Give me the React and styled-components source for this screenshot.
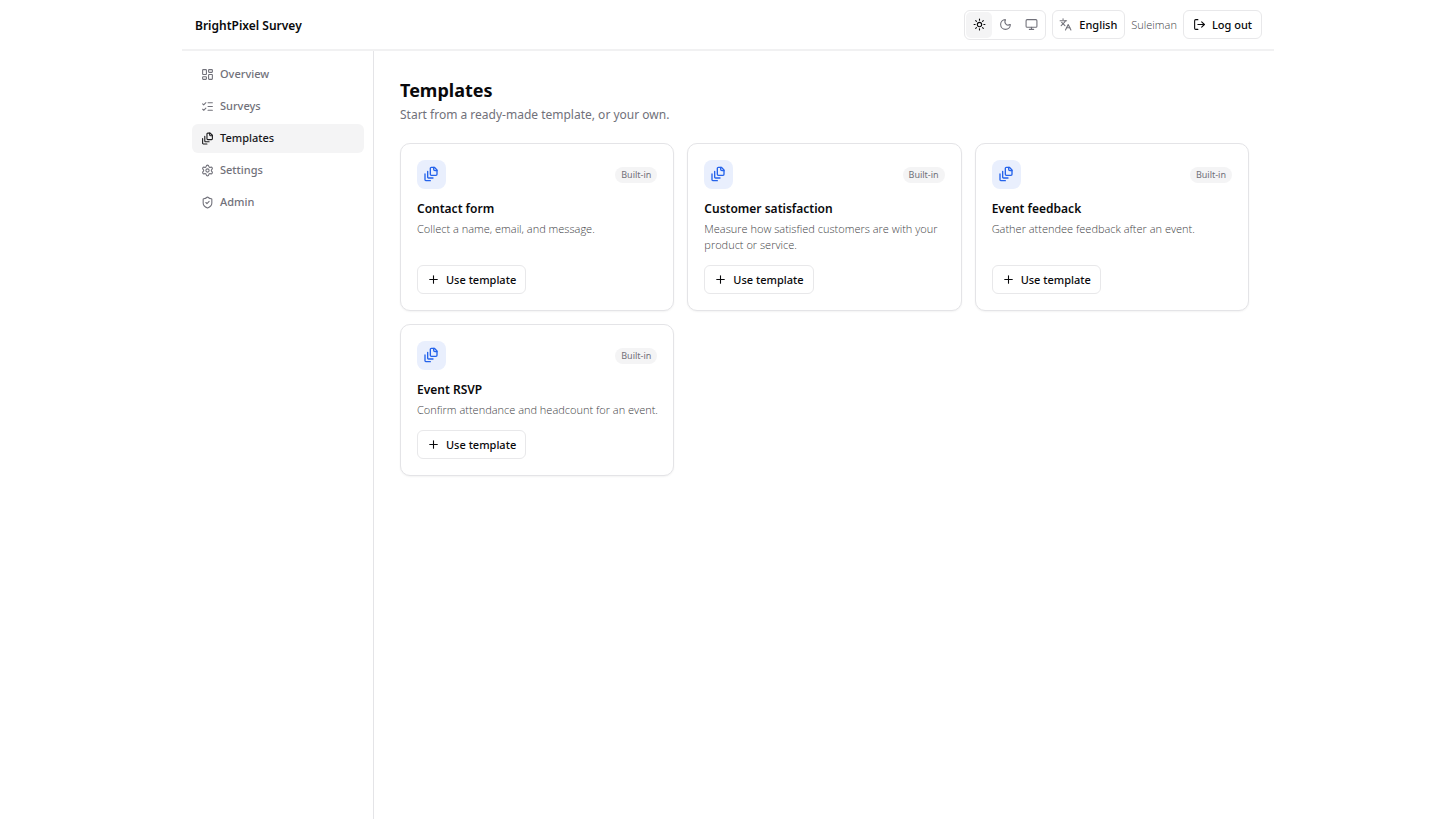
import React, { useState } from 'react';
import styled, { createGlobalStyle, css } from 'styled-components';
import {
  LayoutDashboard, ListChecks, Settings, ShieldCheck,
  Sun, Moon, Monitor, Languages, LogOut, Plus,
} from 'lucide-react';

const GlobalStyle = createGlobalStyle`
  *, *::before, *::after { box-sizing: border-box; }
  body {
    margin: 0;
    background: #fff;
    color: #09090b;
    font-family: "Noto Sans", "Open Sans", sans-serif;
    font-size: 11px;
    line-height: 16px;
  }
  h1, h2, p, ul { margin: 0; padding: 0; }
  button { font: inherit; color: inherit; cursor: pointer; }
`;

const lightText = css`
  color: #3f3f46;
  font-family: "Open Sans", "Noto Sans", sans-serif;
  font-weight: 300;
`;

const Shell = styled.div`
  width: 75%;
  min-height: 100vh;
  margin: 0 auto;
  display: flex;
  flex-direction: column;
`;

const Header = styled.header`
  display: flex;
  align-items: center;
  justify-content: space-between;
  height: 51px;
  padding: 0 12px 0 13px;
  border-bottom: 2px solid #f1f1f2;
`;

const Brand = styled.a`
  padding-top: 2px;
  color: inherit;
  font-size: 12px;
  font-weight: 600;
  text-decoration: none;
`;

const Tools = styled.div`
  display: flex;
  align-items: center;
  gap: 6px;
`;

const ThemeSwitch = styled.div`
  display: flex;
  padding: 1px;
  border: 1px solid #e8e8ea;
  border-radius: 6px;
`;

const ThemeButton = styled.button`
  display: grid;
  place-items: center;
  width: 26px;
  height: 26px;
  padding: 0;
  border: 0;
  border-radius: 5px;
  background: ${(p) => (p.$active ? '#f4f4f5' : 'transparent')};
  color: ${(p) => (p.$active ? '#09090b' : '#71717a')};
`;

const OutlineButton = styled.button`
  display: inline-flex;
  align-items: center;
  gap: 6px;
  height: 29px;
  padding: 0 9px;
  border: 1px solid #e8e8ea;
  border-radius: 6px;
  background: #fff;
  font-weight: 500;
`;

const LanguageButton = styled(OutlineButton)`
  gap: 7px;
  padding: 0 7px 0 6px;
  svg { color: #71717a; }
`;

const UserName = styled.span`
  ${lightText}
`;

const Body = styled.div`
  display: flex;
  flex: 1;
`;

const Sidebar = styled.nav`
  flex: none;
  width: 192px;
  padding: 9px 9px 9px 10px;
  border-right: 1px solid #e4e4e7;
`;

const NavList = styled.ul`
  display: grid;
  gap: 3px;
  list-style: none;
`;

const NavLink = styled.a`
  display: flex;
  align-items: center;
  gap: 6px;
  height: 29px;
  padding: 0 9px 1px;
  border-radius: 6px;
  color: #71717a;
  font-weight: 500;
  text-decoration: none;
  ${(p) => p.$active && css`
    background: #f4f4f5;
    color: #18181b;
  `}
`;

const Main = styled.main`
  flex: 1;
  min-width: 0;
  padding: 26px 25px 26px 26px;
`;

const Title = styled.h1`
  font-size: 18px;
  font-weight: 700;
  line-height: 26px;
`;

const Subtitle = styled.p`
  color: #71717a;
  font-size: 12px;
  line-height: 24px;
`;

const CardGrid = styled.div`
  display: grid;
  grid-template-columns: repeat(3, minmax(0, 1fr));
  gap: 13px;
  margin-top: 16px;
`;

const Card = styled.article`
  display: flex;
  flex-direction: column;
  align-items: flex-start;
  padding: 16px;
  border: 1px solid #e4e4e7;
  border-radius: 10px;
  background: #fff;
  box-shadow: 0 1px 2px rgba(0, 0, 0, 0.05);
`;

const CardTop = styled.div`
  display: flex;
  align-items: center;
  justify-content: space-between;
  width: 100%;
`;

const IconTile = styled.span`
  display: flex;
  width: 29px;
  height: 29px;
  padding: 6px;
  border-radius: 8px;
  background: #e9effd;
  color: #2563eb;
`;

const Badge = styled.span`
  padding: 0 6px;
  border-radius: 8px;
  background: #f4f4f5;
  color: #71717a;
  font-size: 9px;
`;

const CardTitle = styled.h2`
  margin-top: 11px;
  font-size: 12px;
  font-weight: 600;
  line-height: 18px;
`;

const CardText = styled.p`
  flex: 1;
  margin: 3px -6px 12px 0;
  ${lightText}
`;

function FileStack({ size }) {
  return (
    <svg
      width={size}
      height={size}
      viewBox="0 0 24 24"
      fill="none"
      stroke="currentColor"
      strokeWidth="2"
      strokeLinecap="round"
      strokeLinejoin="round"
      aria-hidden="true"
    >
      <path d="M21 7h-3a2 2 0 0 1-2-2V2" />
      <path d="M21 6v6.5c0 .8-.7 1.5-1.5 1.5h-7c-.8 0-1.5-.7-1.5-1.5v-9c0-.8.7-1.5 1.5-1.5H17Z" />
      <path d="M7 8v8.8c0 .3.2.6.4.8.2.2.5.4.8.4H15" />
      <path d="M3 12v8.8c0 .3.2.6.4.8.2.2.5.4.8.4H11" />
    </svg>
  );
}

const navItems = [
  { label: 'Overview', icon: LayoutDashboard },
  { label: 'Surveys', icon: ListChecks },
  { label: 'Templates', icon: FileStack },
  { label: 'Settings', icon: Settings },
  { label: 'Admin', icon: ShieldCheck },
];

const themes = [
  { label: 'Light', icon: Sun },
  { label: 'Dark', icon: Moon },
  { label: 'System', icon: Monitor },
];

const templates = [
  { title: 'Contact form', text: 'Collect a name, email, and message.' },
  { title: 'Customer satisfaction', text: 'Measure how satisfied customers are with your product or service.' },
  { title: 'Event feedback', text: 'Gather attendee feedback after an event.' },
  { title: 'Event RSVP', text: 'Confirm attendance and headcount for an event.' },
];

export default function App() {
  const [theme, setTheme] = useState('Light');
  return (
    <>
      <GlobalStyle />
      <Shell>
        <Header>
          <Brand href="#">BrightPixel Survey</Brand>
          <Tools>
            <ThemeSwitch role="group" aria-label="Theme">
              {themes.map(({ label, icon: Icon }) => (
                <ThemeButton
                  key={label}
                  type="button"
                  aria-label={label}
                  aria-pressed={theme === label}
                  $active={theme === label}
                  onClick={() => setTheme(label)}
                >
                  <Icon size={13} />
                </ThemeButton>
              ))}
            </ThemeSwitch>
            <LanguageButton type="button"><Languages size={13} />English</LanguageButton>
            <UserName>Suleiman</UserName>
            <OutlineButton type="button"><LogOut size={13} />Log out</OutlineButton>
          </Tools>
        </Header>
        <Body>
          <Sidebar aria-label="Main">
            <NavList>
              {navItems.map(({ label, icon: Icon }) => (
                <li key={label}>
                  <NavLink
                    href={`#${label.toLowerCase()}`}
                    $active={label === 'Templates'}
                    aria-current={label === 'Templates' ? 'page' : undefined}
                  >
                    <Icon size={13} />{label}
                  </NavLink>
                </li>
              ))}
            </NavList>
          </Sidebar>
          <Main>
            <Title>Templates</Title>
            <Subtitle>Start from a ready-made template, or your own.</Subtitle>
            <CardGrid>
              {templates.map((t) => (
                <Card key={t.title}>
                  <CardTop>
                    <IconTile><FileStack size={16} /></IconTile>
                    <Badge>Built-in</Badge>
                  </CardTop>
                  <CardTitle>{t.title}</CardTitle>
                  <CardText>{t.text}</CardText>
                  <OutlineButton type="button"><Plus size={13} />Use template</OutlineButton>
                </Card>
              ))}
            </CardGrid>
          </Main>
        </Body>
      </Shell>
    </>
  );
}
